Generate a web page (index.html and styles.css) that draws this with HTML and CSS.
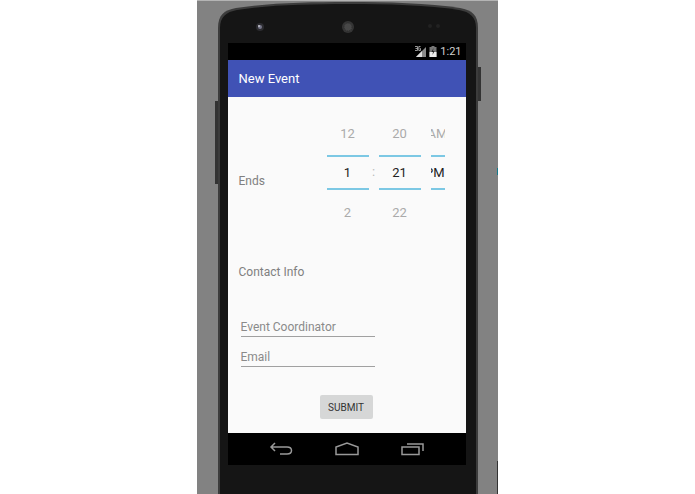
FILE: index.html
```html
<!DOCTYPE html>
<html lang="en">
  <head>
    <meta charset="UTF-8" />
    <meta name="viewport" content="width=device-width, initial-scale=1.0" />
    <title>New Event</title>
    <link rel="stylesheet" href="styles.css">
  </head>
  <body>
    <div class="stage">
      <div class="phone">
        <div class="side-button volume"></div>
        <div class="side-button power"></div>

        <svg class="phone-top" viewBox="0 0 260 43" aria-hidden="true">
          <path d="M0 43 V28 C0 15 6 10 18 8 C50 3 90 2 130 2 C170 2 210 3 242 8 C254 10 260 15 260 28 V43 Z" fill="#3c3c3c"/>
          <path d="M2 43 V28 C2 17 8 12 19 10 C50 5 90 4 130 4 C170 4 210 5 241 10 C252 12 258 17 258 28 V43 Z" fill="#151515"/>
          <circle cx="42" cy="27" r="4" fill="#2c2c30"/>
          <circle cx="42" cy="27" r="2" fill="#77778a"/>
          <circle cx="41" cy="26" r="1" fill="#c4c4cc"/>
          <circle cx="130" cy="27" r="6" fill="#353535"/>
          <circle cx="130" cy="27" r="4" fill="#484848" stroke="#2a2a2a" stroke-dasharray="1 1"/>
          <circle cx="212" cy="26" r="2" fill="#222"/>
          <circle cx="220" cy="26" r="2" fill="#222"/>
        </svg>

        <div class="screen">
          <div class="status-bar">
            <svg width="11" height="11" viewBox="0 0 11 11" aria-hidden="true">
              <path d="M11 1 V11 H1 Z" fill="#8a8a8a"/>
              <path d="M7 5 V11 H1 Z" fill="#ddd"/>
              <path d="M0 0 H6 V5 H0 Z" fill="#000"/>
              <path d="M0 .5 H2.500 V4.500 H0 M.5 2.500 H2.500 M5.500 .5 H3.800 V4.500 H5.500 V2.500 H4.800" fill="none" stroke="#bbb" stroke-width=".8"/>
            </svg>
            <svg width="8" height="11" viewBox="0 0 8 11" aria-hidden="true">
              <path d="M2.500 0 H5.500 V1 H7.500 V11 H.5 V1 H2.500 Z" fill="#777"/>
              <path d="M.5 6 H7.500 V11 H.5 Z" fill="#eee"/>
              <path d="M4.500 2 L2.500 6 H4 L3.500 9 L5.500 5 H4 Z" fill="#222"/>
            </svg>
            <span>1:21</span>
          </div>

          <h1 class="app-bar">New Event</h1>

          <form class="event-form">
            <div class="ends-row">
              <label for="hour">Ends</label>
              <div class="time-picker">
                <div class="wheel">
                  <button type="button">12</button>
                  <input type="text" id="hour" value="1" />
                  <button type="button">2</button>
                </div>
                <div class="colon">:</div>
                <div class="wheel">
                  <button type="button">20</button>
                  <input type="text" aria-label="Minute" value="21" />
                  <button type="button">22</button>
                </div>
                <div class="wheel period">
                  <button type="button">AM</button>
                  <button type="button" class="selected">PM</button>
                </div>
              </div>
            </div>

            <h2>Contact Info</h2>

            <div class="fields">
              <input type="text" aria-label="Event Coordinator" placeholder="Event Coordinator" />
              <input type="email" aria-label="Email" placeholder="Email" />
            </div>

            <button type="submit" class="submit">SUBMIT</button>
          </form>

          <div class="nav-bar">
            <button type="button" aria-label="Back">
              <svg width="24" height="14" viewBox="0 0 24 14">
                <path d="M6 1 L2 5 L6 9 M2 5 H18 C24 5 24 12 18 12 H11" fill="none" stroke="#999" stroke-width="1.500"/>
              </svg>
            </button>
            <button type="button" aria-label="Home">
              <svg width="24" height="14" viewBox="0 0 24 14">
                <path d="M1 12.500 V5 L12 1 L23 5 V12.500 Z" fill="none" stroke="#999" stroke-width="1.500"/>
              </svg>
            </button>
            <button type="button" aria-label="Recent apps">
              <svg width="24" height="14" viewBox="0 0 24 14">
                <path d="M1 5 H18 V12.500 H1 Z M6 2 H22 V9" fill="none" stroke="#999" stroke-width="1.500"/>
              </svg>
            </button>
          </div>
        </div>
      </div>
    </div>
  </body>
</html>
```
FILE: styles.css
```css
* {
  box-sizing: border-box;
}

body {
  margin: 0;
  background-color: #fff;
  font-family: Roboto, "Liberation Sans", sans-serif;
  font-size: 12px;
  color: #808080;
}

button,
input {
  font-family: inherit;
  font-size: inherit;
  color: inherit;
  margin: 0;
  padding: 0;
  border: 0;
  border-radius: 0;
  background: none;
  min-width: 0;
}

.stage {
  position: relative;
  display: flex;
  justify-content: center;
  width: 100%;
  max-width: 301px;
  min-height: 100vh;
  margin: 0 auto;
  background-color: #828282;
  border-top: 1px solid #b4b4b4;
}

/* bits of the window behind, showing at the right edge */
.stage::before,
.stage::after {
  content: "";
  position: absolute;
  right: 0;
  width: 1px;
}

.stage::before {
  top: 167px;
  height: 7px;
  background-color: #147a8c;
}

.stage::after {
  bottom: 0;
  height: 33px;
  background-color: #333;
}

.phone {
  position: relative;
  display: flex;
  flex-direction: column;
  width: 260px;
  background: linear-gradient(#151515, #151515) 0 41px no-repeat;
}

.phone-top {
  display: block;
  width: 100%;
  margin-top: -1px;
}

.side-button {
  position: absolute;
  width: 3px;
  background-color: #333;
}

.volume {
  top: 100px;
  left: -3px;
  height: 83px;
}

.power {
  top: 66px;
  right: -3px;
  height: 34px;
}

.screen {
  margin: 0 12px 0 10px;
  background-color: #fafafa;
}

/* metal rim down both sides */
.phone::before,
.phone::after {
  content: "";
  position: absolute;
  top: 41px;
  bottom: 0;
  width: 2px;
  background-color: #3c3c3c;
}

.phone::before {
  left: 0;
}

.phone::after {
  right: 0;
}

.status-bar {
  display: flex;
  align-items: center;
  justify-content: flex-end;
  gap: 3px;
  height: 17px;
  padding-right: 4px;
  background-color: #000;
  color: #d0d0d0;
  font-size: 11px;
}

.app-bar {
  margin: 0;
  padding: 0 11px;
  background-color: #4052b5;
  color: #fff;
  font-size: 13px;
  font-weight: 400;
  line-height: 37px;
}

.event-form {
  display: flex;
  flex-direction: column;
  padding: 14px 11px;
}

.ends-row {
  display: flex;
  align-items: center;
  justify-content: space-between;
  padding-right: 10px;
}

.ends-row label {
  padding-top: 16px;
}

.time-picker {
  display: flex;
  font-size: 13px;
}

.wheel {
  display: flex;
  flex-direction: column;
  width: 42px;
}

.wheel button {
  display: flex;
  align-items: center;
  justify-content: center;
  height: 44px;
  overflow: hidden;
  color: #aaa;
}

.wheel input,
.wheel .selected {
  width: 100%;
  height: 35px;
  border-top: 2px solid #7cc8e4;
  border-bottom: 2px solid #7cc8e4;
  color: #222;
  text-align: center;
}

.colon {
  width: 10px;
  line-height: 122px;
  text-align: center;
  color: #bbb;
}

.period {
  width: 14px;
  margin-left: 10px;
}

.period .selected {
  justify-content: flex-end;
}

h2 {
  margin: 28px 0 0;
  font-size: 12px;
  font-weight: 400;
  line-height: 20px;
}

.fields {
  display: flex;
  flex-direction: column;
  gap: 8px;
  width: 134px;
  margin: 33px 0 0 2px;
}

.fields input {
  height: 22px;
  padding-top: 3px;
  border-bottom: 1px solid #a0a0a0;
}

.fields input::placeholder {
  color: #8a8a8a;
  opacity: 1;
}

.submit {
  width: 53px;
  height: 24px;
  margin: 28px 0 0 81px;
  border-radius: 2px;
  background-color: #d6d7d7;
  color: #333;
  font-size: 10px;
}

.nav-bar {
  display: flex;
  align-items: center;
  justify-content: center;
  gap: 42px;
  height: 32px;
  background-color: #000;
}

.nav-bar button {
  display: flex;
}
```
